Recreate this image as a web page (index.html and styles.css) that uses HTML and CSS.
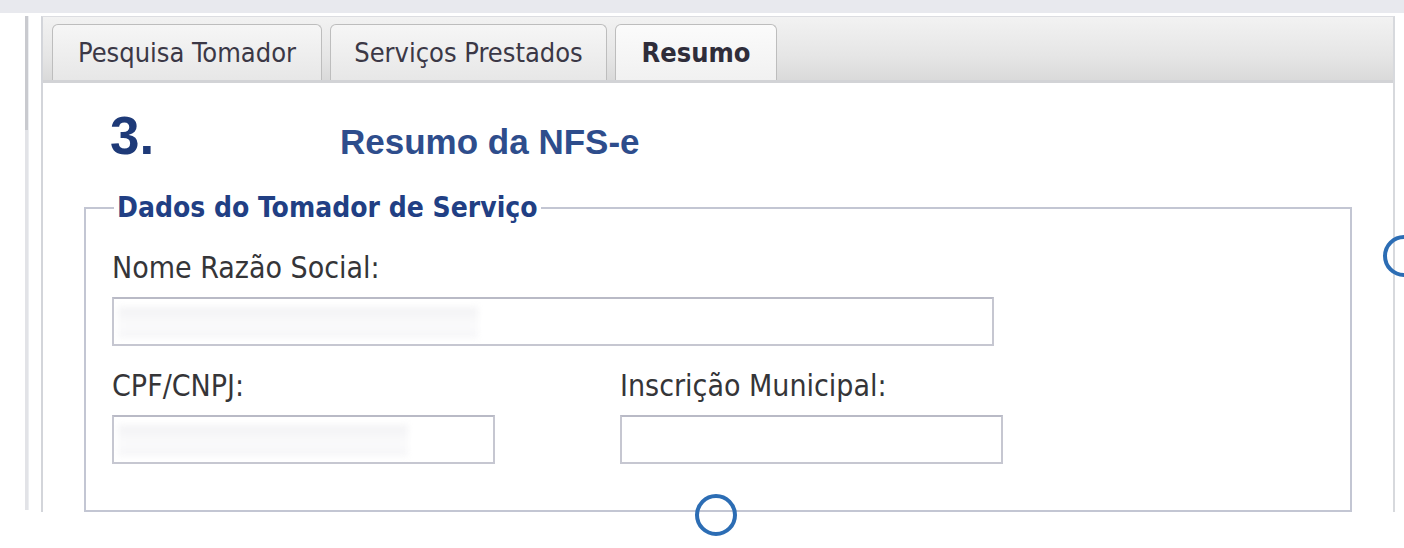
FILE: index.html
```html
<!DOCTYPE html>
<html lang="pt-BR">
<head>
<meta charset="utf-8">
<title>Resumo da NFS-e</title>
<link rel="stylesheet" href="styles.css">
</head>
<body>
<div class="topbar"></div>
<div class="main">
  <div class="edge"><div class="edge-thumb"></div></div>
  <div class="frame">
    <div class="tabbar">
      <div class="tab t1">Pesquisa Tomador</div>
      <div class="tab t2">Serviços Prestados</div>
      <div class="tab t3 active">Resumo</div>
    </div>
    <div class="content">
      <div class="heading">
        <span class="step">3.</span>
        <span class="title">Resumo da NFS-e</span>
      </div>
      <fieldset class="box">
        <legend>Dados do Tomador de Serviço</legend>
        <div class="field">
          <label>Nome Razão Social:</label>
          <div class="input wide"><span class="blur b1"></span></div>
        </div>
        <div class="row">
          <div class="field">
            <label>CPF/CNPJ:</label>
            <div class="input half"><span class="blur b2"></span></div>
          </div>
          <div class="field col2">
            <label>Inscrição Municipal:</label>
            <div class="input half"></div>
          </div>
        </div>
      </fieldset>
    </div>
  </div>
</div>
<div class="marker m-bottom"></div>
<div class="marker m-right"></div>
</body>
</html>
```

FILE: styles.css
```css
html, body {
  margin: 0;
  padding: 0;
  background: #ffffff;
  width: 1404px;
  height: 548px;
  overflow: hidden;
  font-family: "DejaVu Sans Condensed", "DejaVu Sans", sans-serif;
  font-stretch: condensed;
}

.topbar {
  height: 13px;
  background: #e8e9ee;
}

.main {
  display: flex;
  align-items: flex-start;
  padding-top: 3px;
  padding-left: 25px;
}

.edge {
  width: 3px;
  height: 494px;
  background: #e2e3e7;
  border-right: 1px solid #eceef1;
  margin-right: 12px;
}

.edge-thumb {
  height: 114px;
  background: #c9cacf;
}

.frame {
  width: 1350px;
  border-left: 2px solid #d3d5da;
  border-right: 2px solid #d7d9dd;
  border-top: 1px solid #dcdde1;
}

.tabbar {
  display: flex;
  gap: 8px;
  height: 56px;
  padding: 7px 0 0 9px;
  background: linear-gradient(#f2f2f2, #e6e6e6 60%, #dadada);
  border-bottom: 3px solid #d2d3d6;
}

.tab {
  display: flex;
  align-items: center;
  justify-content: center;
  box-sizing: border-box;
  height: 56px;
  border: 1px solid #bdbdbd;
  border-bottom: none;
  border-radius: 6px 6px 0 0;
  background: linear-gradient(#f6f6f6, #e7e7e7);
  color: #3b3846;
  font-size: 27px;
}

.t1 { width: 270px; }
.t2 { width: 277px; }
.t3 { width: 162px; }

.tab.active {
  background: linear-gradient(#fbfbfb, #f1f1f1);
  font-weight: bold;
  color: #2f2d3a;
}

.content {
  padding: 28px 41px 0 41px;
}

.heading {
  display: flex;
  align-items: baseline;
  padding-left: 26px;
  font-family: "Liberation Sans", Arial, sans-serif;
  font-weight: bold;
  line-height: 50px;
}

.step {
  width: 230px;
  font-size: 53px;
  color: #1e3a78;
}

.title {
  font-size: 35px;
  color: #2e4d8c;
}

.box {
  margin: 26px 0 0 0;
  padding: 27px 26px 46px 26px;
  border: 2px solid #c3c6d3;
}

.box legend {
  padding: 0 3px;
  margin-left: 2px;
  font-weight: bold;
  font-size: 28px;
  color: #213f84;
  line-height: 30px;
}

.field {
  display: flex;
  flex-direction: column;
}

.field label {
  font-size: 30px;
  line-height: 36px;
  color: #353538;
  margin-bottom: 11px;
}

.row {
  display: flex;
  margin-top: 22px;
}

.col2 {
  margin-left: 125px;
}

.input {
  position: relative;
  height: 49px;
  box-sizing: border-box;
  border: 2px solid #c6c7d1;
  border-top-color: #b9bac6;
  background: #ffffff;
  overflow: hidden;
}

.wide { width: 882px; }
.half { width: 383px; }

.blur {
  position: absolute;
  top: 8px;
  bottom: 6px;
  left: 4px;
  background: linear-gradient(#f2f2f4, #fbfbfc 60%, #f5f5f7);
  filter: blur(3px);
}

.b1 { width: 360px; }
.b2 { width: 290px; }

.marker {
  position: absolute;
  width: 34px;
  height: 34px;
  border: 4px solid #2c6db4;
  border-radius: 50%;
}

.m-bottom {
  left: 695px;
  top: 494px;
}

.m-right {
  left: 1383px;
  top: 235px;
}
```
